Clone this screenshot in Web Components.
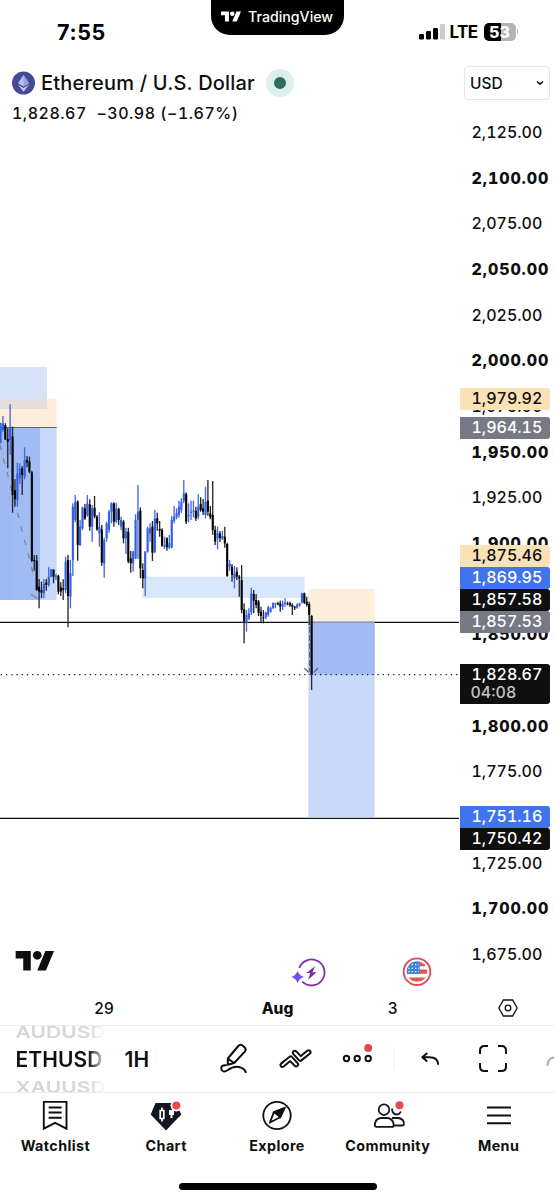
<!DOCTYPE html>
<html lang="en">
<head>
<meta charset="utf-8">
<meta name="viewport" content="width=device-width, initial-scale=1">
<title>ETHUSD</title>
<style>
  body {
    margin: 0;
    background: #fff;
    color: #0f0f0f;
    font-family: Inter, "Liberation Sans", sans-serif;
  }
</style>
</head>
<body>
<c-app></c-app>

<script>
const make = (html) => {
  const template = document.createElement("template");
  template.innerHTML = html;
  return template;
};

const define = (name, html, setup) => {
  const template = make(html);
  customElements.define(name, class extends HTMLElement {
    constructor() {
      super();
      const shadow = this.attachShadow({ mode: "open" });
      shadow.appendChild(template.content.cloneNode(true));
      if (setup) setup(this, shadow);
    }
  });
};

// logo, drawn with the current text colour
define("c-logo", `
<style>
    :host{ display: block; width: 20px; height: 11px; }
    svg{ display: block; width: 100%; height: 100%; }
</style>
<svg viewBox="0 4 35.5 18" fill="currentColor"><path d="M14 22H7V11H0V4h14zM28 22h-8l7.5-18h8z"/><circle cx="20" cy="8" r="4"/></svg>
`);

define("c-status-bar", `
<style>
    :host{
        position: relative;
        display: flex;
        align-items: center;
        justify-content: space-between;
        box-sizing: border-box;
        height: 60px;
        padding: 3px 37px 0 57px;
        color: #000;
    }
    .time{ font-size: 21.5px; font-weight: 700; letter-spacing: .6px; }
    .island{
        position: absolute;
        top: 0;
        left: 211px;
        box-sizing: border-box;
        width: 133px;
        height: 35px;
        padding: 0 10px 2px;
        display: flex;
        align-items: center;
        gap: 7px;
        border-radius: 0 0 19px 19px;
        background: #000;
        color: #fff;
        font-size: 14.2px;
        font-weight: 500;
    }
    .right{ display: flex; align-items: center; }
    .right svg{ display: block; }
    .lte{ margin: 0 6px 0 5px; font-size: 17px; font-weight: 650; letter-spacing: -.6px; }
    .battery{
        width: 32px;
        height: 18px;
        border-radius: 5px;
        background: linear-gradient(90deg, #000 53%, #b3b3b3 53%);
        color: #fff;
        font-size: 16px;
        line-height: 18px;
        font-weight: 800;
        text-align: center;
    }
    .cap{ width: 1.5px; height: 5px; margin-left: 1px; border-radius: 0 2px 2px 0; background: #b3b3b3; }
</style>
<span class="time">7:55</span>
<div class="island"><c-logo></c-logo><span>TradingView</span></div>
<div class="right">
    <svg width="26" height="17" viewBox="0 0 26 17"><rect y="11" width="5" height="5.500" rx="1.300"/><rect x="7" y="8" width="5" height="8.500" rx="1.300"/><rect x="14" y="5" width="5" height="11.500" rx="1.300"/><rect x="21" y="1" width="5" height="15.500" rx="1.300" fill="#ccc"/></svg>
    <span class="lte">LTE</span>
    <div class="battery">53</div>
    <div class="cap"></div>
</div>
`);

define("c-symbol-header", `
<style>
    :host{ display: block; height: 70px; padding-left: 12px; box-sizing: border-box; }
    .name{ display: flex; align-items: center; height: 46px; font-size: 20px; font-weight: 500; letter-spacing: .2px; }
    .name svg{ display: block; margin-right: 6px; }
    .market{
        width: 12px;
        height: 12px;
        margin-left: 11px;
        border: 8px solid #dcefea;
        border-radius: 50%;
        background: #2c6e5d;
    }
    .price{ font-size: 16px; line-height: 16px; margin-top: -1px; letter-spacing: .5px; white-space: pre; font-weight: 500; font-variant-numeric: tabular-nums; }
</style>
<div class="name">
    <svg width="23" height="24" viewBox="0 0 23 24"><circle cx="11.500" cy="12" r="11.500" fill="#454a91"/><path d="M11.500 4 17 12.300 11.500 15.500 6 12.300z" fill="#b9c4f5"/><path d="M11.500 4v11.500L17 12.300z" fill="#8fa2e8"/><path d="m6 13.700 5.500 3.200 5.500-3.200-5.500 7z" fill="#c5cdf5"/></svg>
    <span class="title"><slot></slot></span>
    <i class="market"></i>
</div>
<div class="price"><slot name="price"></slot></div>
`);

// candles: high, body top, body bottom, low, and 1 when the bar closed up.
// Everything in the plot is in 3x pixels.
const CANDLES = [
  [188,190,250,250,1],[168,190,210,215,1],[190,195,238,240,0],[205,237,245,325,0],[133,200,240,285,1],
  [200,230,405,458,0],[358,390,418,440,0],[308,340,420,440,1],[310,325,355,372,1],[318,325,345,405,0],
  [262,300,350,358,1],[288,300,308,322,0],[290,305,335,340,0],[333,337,602,607,0],[585,600,603,632,0],
  [585,602,690,692,0],[657,680,695,745,0],[665,690,698,715,0],[658,672,700,715,1],[657,668,675,692,0],
  [622,650,675,680,1],[627,628,650,652,1],[627,630,650,670,0],[643,648,650,660,1],[645,647,695,703,0],
  [667,682,695,708,0],[658,685,690,720,0],[590,605,690,700,1],[585,600,708,802,0],[600,640,710,745,1],
  [430,440,600,648,1],[405,425,480,487,1],[421,425,555,602,0],[480,500,555,558,1],[440,442,505,510,1],
  [432,445,475,480,0],[405,430,465,470,1],[418,433,500,512,0],[435,445,500,545,1],[408,443,470,475,0],
  [465,470,508,512,0],[457,500,520,560,1],[495,508,608,617,0],[533,540,610,653,1],[485,490,535,545,1],
  [450,455,510,518,1],[427,430,455,490,1],[427,430,485,500,0],[428,445,485,490,1],[443,447,480,495,0],
  [470,480,500,510,1],[480,485,535,550,0],[503,515,535,582,1],[503,515,605,610,0],[573,595,610,638,0],
  [572,575,610,635,1],[463,480,595,597,1],[375,455,480,597,1],[442,452,625,655,0],[610,630,655,685,0],
  [573,575,655,708,1],[500,505,575,578,1],[490,505,520,545,1],[483,500,578,603,0],[450,475,575,580,1],
  [458,475,490,512,0],[483,507,512,530,0],[505,510,557,560,0],[530,555,560,567,1],[532,535,562,572,0],
  [525,550,563,567,1],[468,480,563,565,1],[438,470,483,490,1],[445,460,472,478,1],[422,440,465,473,1],
  [415,425,450,458,1],[360,400,422,430,1],[397,402,485,492,0],[430,465,468,487,1],[422,455,458,480,1],
  [422,452,455,472,1],[440,452,475,483,0],[403,440,470,478,1],[412,432,450,455,0],[417,445,455,465,0],
  [380,425,465,475,1],[360,422,455,467,0],[438,460,472,478,0],[363,465,510,524,0],[497,510,545,555,0],
  [500,520,535,568,1],[513,520,535,547,0],[513,528,535,540,1],[500,530,550,563,0],[548,552,648,650,0],
  [600,612,620,632,1],[612,620,645,665,0],[618,640,655,685,1],[622,635,650,660,0],[645,650,655,710,0],
  [615,660,750,760,0],[730,748,785,850,0],[750,765,790,815,1],[745,760,775,780,1],[683,700,757,765,1],
  [690,702,722,760,0],[703,720,735,745,0],[720,725,758,768,0],[740,755,768,785,0],[750,772,775,790,0],
  [755,758,772,778,1],[737,742,765,770,1],[740,745,755,758,1],[727,730,744,747,1],[728,730,733,745,1],
  [725,730,733,736,0],[722,730,740,755,0],[722,732,740,750,1],[715,728,732,740,1],[725,730,733,736,0],
  [725,730,736,740,0],[730,735,740,765,0],[738,740,743,750,0],[730,734,743,746,1],[728,730,736,740,1],
  [698,700,728,730,1],[698,700,728,732,0],[710,725,735,740,0],[725,732,765,795,0],[765,768,945,990,0]
];

define("c-plot", `
<style>
    :host{ display: block; }
    svg{ display: block; width: 460px; height: 860px; }
</style>
<svg viewBox="0 390 1380 2580">
    <rect y="1101" width="141" height="126" fill="#d4e3fa"/>
    <rect y="1196" width="170" height="87" fill="#fdeedb"/>
    <rect y="1196" width="141" height="31" fill="#e4dedb"/>
    <rect y="1283" width="170" height="517" fill="#c7d8fa"/>
    <rect y="1283" width="120" height="517" fill="#a1bcf4"/>
    <rect y="1283" width="40" height="517" fill="#9fbaf3"/>
    <path d="M0 1282.500h170" stroke="#5d6474" stroke-width="3.500"/>
    <rect x="427" y="1730" width="487" height="64" fill="#d9e7fc"/>
    <rect x="925" y="1767" width="199" height="98" fill="#fdeedb"/>
    <rect x="925" y="1866" width="199" height="585" fill="#c8d8f9"/>
    <rect x="925" y="1866" width="199" height="158" fill="#a2bbf4"/>
    <path d="M0 1867h925M1124 1867h253M0 2455h1377" stroke="#111" stroke-width="4"/>
    <path d="M925 1866h199" stroke="#6f7789" stroke-width="3"/>
    <path d="M2 2024h1375" stroke="#222" stroke-width="4" stroke-dasharray="4 11.700"/>
    <path d="M0 1335 104 1738" fill="none" stroke="#777e8e" stroke-width="3.500" stroke-dasharray="16 26"/>
    <path d="m93 1783 18 12" stroke="#777e8e" stroke-width="3.500"/>
    <g class="candles" transform="translate(0 1080)"></g>
    <path d="m913 2005 21 19m7-6 14-15M929 1880v135" fill="none" stroke="#59647c" stroke-width="4" stroke-dasharray="18 7"/>
    <g transform="translate(47 2853) scale(3.240)" fill="#0f0f0f"><path d="M14 18H7V7H0V0h14zM28 18h-8l7.500-18h8z"/><circle cx="20" cy="4" r="4"/></g>
    <g transform="translate(825 2790)">
        <path d="M73 114A39 39 0 1 1 82 155" fill="none" stroke="#8230a5" stroke-width="5.500"/>
        <path d="m121 108-27 21h12l-7 20 26-22h-13z" fill="#7b2fa5"/>
        <path d="M68 122q4 14 19 19-15 4-19 19-5-15-19-19 14-5 19-19z" fill="#7250f0"/>
    </g>
    <g transform="translate(1251 2915)">
        <circle r="40" fill="#fff" stroke="#e14a50" stroke-width="5.500"/>
        <g clip-path="url(#flag)">
            <path d="M-32-23h64M-32 0h64M-32 24h64" stroke="#d95c59" stroke-width="13"/>
            <path d="M-32-32H8V7h-40z" fill="#3d83dc"/>
            <path d="M-26-21H6M-26-10H6M-26 0H6" stroke="#fff" stroke-width="4" stroke-dasharray="4 6"/>
        </g>
        <clipPath id="flag"><circle r="31"/></clipPath>
    </g>
</svg>
`, (host, shadow) => {
  const group = shadow.querySelector(".candles");
  group.innerHTML = CANDLES.map(([high, top, bottom, low, up], i) => {
    const x = 1.5 + i * 7.235;
    const wick = up ? "#4068e0" : "#26272c";
    const body = up ? "#3560e0" : "#050609";
    return `<path d="M${x} ${high}V${low}" stroke="${wick}" stroke-width="4"/>` +
      `<path d="M${x} ${top}V${bottom}" stroke="${body}" stroke-width="6.4"/>`;
  }).join("");
});

define("c-price-tag", `
<style>
    :host{
        position: absolute;
        left: 0;
        box-sizing: border-box;
        width: 89.500px;
        height: 22px;
        padding-left: 11.500px;
        border-radius: 0 3px 3px 0;
        color: #fff;
        font-size: 16px;
        line-height: 20.500px;
        font-weight: 500;
        letter-spacing: 0;
        font-variant-numeric: tabular-nums;
    }
    :host([kind="sand"]){ background: #fae1b6; color: #0f0f0f; }
    :host([kind="gray"]){ background: #777985; }
    :host([kind="blue"]){ background: #3f74ed; }
    :host([kind="black"]){ background: #0f0f0f; }
    ::slotted(small){ display: block; margin: -1px 0 0 -1px; color: #c4c4c4; font-size: 16px; line-height: 16px; }
</style>
<slot></slot>
`);

define("c-price-axis", `
<style>
    :host{ position: relative; display: block; width: 95px; }
    .currency{
        display: flex;
        align-items: center;
        justify-content: space-between;
        box-sizing: border-box;
        width: 86px;
        height: 34px;
        margin: 6px 0 10px 4px;
        padding: 0 5px 0 5px;
        border: 1px solid #e6e6e6;
        border-radius: 4px;
        font-size: 15.500px;
        font-weight: 500;
    }
    .tick{
        height: 45.670px;
        padding-left: 11.500px;
        font-size: 16px;
        line-height: 45.670px;
        font-weight: 500;
        letter-spacing: 0;
        font-variant-numeric: tabular-nums;
        white-space: nowrap;
    }
    .tick.major{ font-weight: 850; letter-spacing: .9px; }
</style>
<div class="currency"><span>USD</span><svg width="8" height="6" viewBox="0 0 8 6"><path d="m1 1.500 3 2.700 3-2.700" fill="none" stroke="#0f0f0f" stroke-width="1.600"/></svg></div>
<div class="ticks"></div>
<c-price-tag kind="sand" style="top:328px">1,979.92</c-price-tag>
<c-price-tag kind="gray" style="top:356.500px">1,964.15</c-price-tag>
<c-price-tag kind="sand" style="top:485px">1,875.46</c-price-tag>
<c-price-tag kind="blue" style="top:507px">1,869.95</c-price-tag>
<c-price-tag kind="black" style="top:529px">1,857.58</c-price-tag>
<c-price-tag kind="gray" style="top:551px">1,857.53</c-price-tag>
<c-price-tag kind="black" style="top:604px;height:40px">1,828.67<small>04:08</small></c-price-tag>
<c-price-tag kind="blue" style="top:745.500px">1,751.16</c-price-tag>
<c-price-tag kind="black" style="top:767.500px">1,750.42</c-price-tag>
`, (host, shadow) => {
  const ticks = shadow.querySelector(".ticks");
  for (let price = 2125; price >= 1675; price -= 25) {
    const tick = document.createElement("div");
    tick.className = price % 50 ? "tick" : "tick major";
    tick.textContent = price.toLocaleString("en-US", { minimumFractionDigits: 2 });
    ticks.appendChild(tick);
  }
});

define("c-time-axis", `
<style>
    :host{
        display: grid;
        grid-template-columns: 208px 139px 91px 117px;
        align-items: center;
        height: 35px;
        font-size: 15.500px;
        text-align: center;
        font-weight: 500;
    }
    span, b{ padding-top: 1px; }
    b{ font-weight: 800; }
    svg{ display: block; margin-left: 60px; }
</style>
<span>29</span><b>Aug</b><span>3</span>
<svg width="20" height="18" viewBox="0 0 20 18" fill="none" stroke="#0f0f0f" stroke-width="1.300"><path d="M5.400 1h9.200L19.200 9l-4.600 8H5.400L.800 9z"/><circle cx="10" cy="9" r="2.800"/></svg>
`);

define("c-symbol-wheel", `
<style>
    :host{
        display: flex;
        flex-direction: column;
        justify-content: center;
        width: 88px;
        height: 67px;
        overflow: hidden;
        font-size: 21px;
        font-weight: 600;
        letter-spacing: .1px;
        -webkit-mask-image: linear-gradient(90deg, #000 72px, transparent 91px);
        mask-image: linear-gradient(90deg, #000 72px, transparent 91px);
    }
    span{ flex: none; height: 28px; line-height: 29px; white-space: nowrap; }
    .side{ color: #d6d6d6; transform: scaleY(.78); }
    .top{ position: relative; top: 1px; }
</style>
<span class="side top">AUDUSD</span>
<span>ETHUSD</span>
<span class="side">XAUUSD</span>
`);

define("c-toolbar", `
<style>
    :host{
        display: flex;
        align-items: center;
        box-sizing: border-box;
        height: 68px;
        padding-left: 15.500px;
        border-top: 1px solid #ebebeb;
        border-bottom: 1px solid #ebebeb;
        overflow: hidden;
    }
    .interval{ width: 27px; margin: 0 67px 0 21px; font-size: 21px; font-weight: 600; }
    svg{ display: block; flex: none; fill: none; stroke: #0f0f0f; stroke-width: 2; stroke-linecap: round; stroke-linejoin: round; }
</style>
<c-symbol-wheel></c-symbol-wheel>
<span class="interval">1H</span>
<svg width="336" height="40" viewBox="219 1039 336 40">
    <path d="M227.800 1058.500 238.300 1046q2-2.200 4.400-.3l1.800 1.600q2.200 2 .3 4.300L234.200 1063l-6.400 1.800zM227.800 1058.500l6.200 4.600"/>
    <path d="M226 1065.300c-3-.6-5 1-4.800 3.400.3 3 3.500 3.600 6.300 1.600 5-3.600 9-4.600 13.500-2.600 2.800 1.200 4.300 2.600 4.800 4.500"/>
    <path d="m281.300 1063.400 8.300-6.600q1.300-1 2.500.3l5.500 6c1.600 2-.9 4.500-2.900 2.700l-4.500-4.700-6.500 5.400c-2.400 1.500-4.400-1.400-2.400-3.100zM309.700 1053.800l-8.300 6.600q-1.300 1-2.500-.3l-5.500-6c-1.600-2 .9-4.500 2.900-2.700l4.500 4.700 6.500-5.400c2.400-1.500 4.400 1.400 2.400 3.100z"/>
    <circle cx="346.500" cy="1058.500" r="2.700"/><circle cx="357.200" cy="1058.500" r="2.700"/><circle cx="368.200" cy="1058.500" r="2.700"/>
    <circle cx="368.200" cy="1048" r="4" fill="#e34850" stroke="none"/>
    <path d="M394 1047.500v22" stroke="#efefef" stroke-width="1"/>
    <path d="m427.300 1053-5 4.300 5 4.200M422.500 1057.300h7q8.500 0 8.700 7.500" stroke-linecap="butt"/>
    <path d="M480 1054v-3.500q0-4.500 4.500-4.500h3.500M498 1046h3.500q4.500 0 4.500 4.500v3.500M506 1063v3.500q0 4.500-4.500 4.500h-3.500M488 1071h-3.500q-4.500 0-4.500-4.500v-3.500" stroke-linecap="butt"/>
    <path d="M547.500 1065q.500-6.500 6-7.500" stroke="#aaa"/>
</svg>
`);

define("c-tab", `
<style>
    :host{
        display: flex;
        flex-direction: column;
        align-items: center;
        font-size: 14.300px;
        font-weight: 750;
    }
    ::slotted(svg){ display: block; width: 34px; height: 32px; margin-bottom: 5px; }
    span{ line-height: 18px; white-space: nowrap; letter-spacing: .42px; }
</style>
<slot name="icon"></slot>
<span><slot></slot></span>
`);

define("c-tab-bar", `
<style>
    :host{
        display: flex;
        flex-direction: column;
        align-items: center;
        justify-content: space-between;
        box-sizing: border-box;
        height: 107px;
        padding: 7px 0 10.500px;
    }
    nav{ display: grid; grid-template-columns: repeat(5, 110.800px); width: 100%; }
    .home{ width: 198px; height: 6.500px; border-radius: 4px; background: #000; }
</style>
<nav>
    <c-tab><svg slot="icon" viewBox="0 0 34 32" fill="none" stroke="#0f0f0f" stroke-width="1.900"><path d="M5.800 1.900h22.700v26.800L17.100 22.900 5.800 28.700zM10.600 7.500h13M10.600 12.500h13M10.600 17.700h13"/></svg>Watchlist</c-tab>
    <c-tab><svg slot="icon" viewBox="0 0 34 32"><path d="M6.500 3h20.300l5.500 11.500L17 30.500 1.700 14.500z" fill="#131722"/><path d="M11.200 10.500h3.600v8h-3.600zM13 7.500v3m0 8v3" fill="none" stroke="#fff" stroke-width="1.700"/><path d="M20 10h5v5h-1.500v3h-2v-3H20z" fill="#fff"/><circle cx="27.300" cy="5.600" r="5.800" fill="#fff"/><circle cx="27.300" cy="5.600" r="4" fill="#e9484f"/></svg>Chart</c-tab>
    <c-tab><svg slot="icon" viewBox="0 0 34 32" fill="none" stroke="#0f0f0f" stroke-width="1.800"><circle cx="17" cy="15.500" r="13.700"/><path d="m24.500 8-4.300 9.200-10.300 5.300 4-10.300z" stroke-linejoin="round"/><path d="M24.500 8 14 12.200l6.200 5z" fill="#0f0f0f"/></svg>Explore</c-tab>
    <c-tab><svg slot="icon" viewBox="0 0 34 32" fill="none" stroke="#131722" stroke-width="1.800"><circle cx="13" cy="9.700" r="5.300"/><path d="M9.500 18h7.500q5.500 1.300 5.700 7.200 0 1.700-1.600 1.700H5.500q-1.700 0-1.700-1.700Q4 19 9.500 18zM21 18h6.500q5.500 1 5.500 6 0 1.500-1.600 1.500h-8"/><path d="M21 8.500q.2 6 5 6 2.500 0 3.800-3"/><circle cx="28.500" cy="5.200" r="6" fill="#fff" stroke="none"/><circle cx="28.500" cy="5.200" r="4" fill="#e9484f" stroke="none"/></svg>Community</c-tab>
    <c-tab><svg slot="icon" viewBox="0 0 34 32" fill="none" stroke="#0f0f0f" stroke-width="1.900"><path d="M5 7.500h24M5 15.500h24M5 23.300h24"/></svg>Menu</c-tab>
</nav>
<div class="home"></div>
`);

define("c-app", `
<style>
    :host{ display: flex; flex-direction: column; width: 555px; height: 1200px; overflow: hidden; background: #fff; }
    main{ display: grid; grid-template-columns: 460px 95px; height: 930px; }
    .left{ min-width: 0; }
</style>
<c-status-bar></c-status-bar>
<main>
    <div class="left">
        <c-symbol-header>Ethereum / U.S. Dollar<span slot="price">1,828.67  −30.98 (−1.67%)</span></c-symbol-header>
        <c-plot></c-plot>
    </div>
    <c-price-axis></c-price-axis>
</main>
<c-time-axis></c-time-axis>
<c-toolbar></c-toolbar>
<c-tab-bar></c-tab-bar>
`);
</script>
</body>
</html>
